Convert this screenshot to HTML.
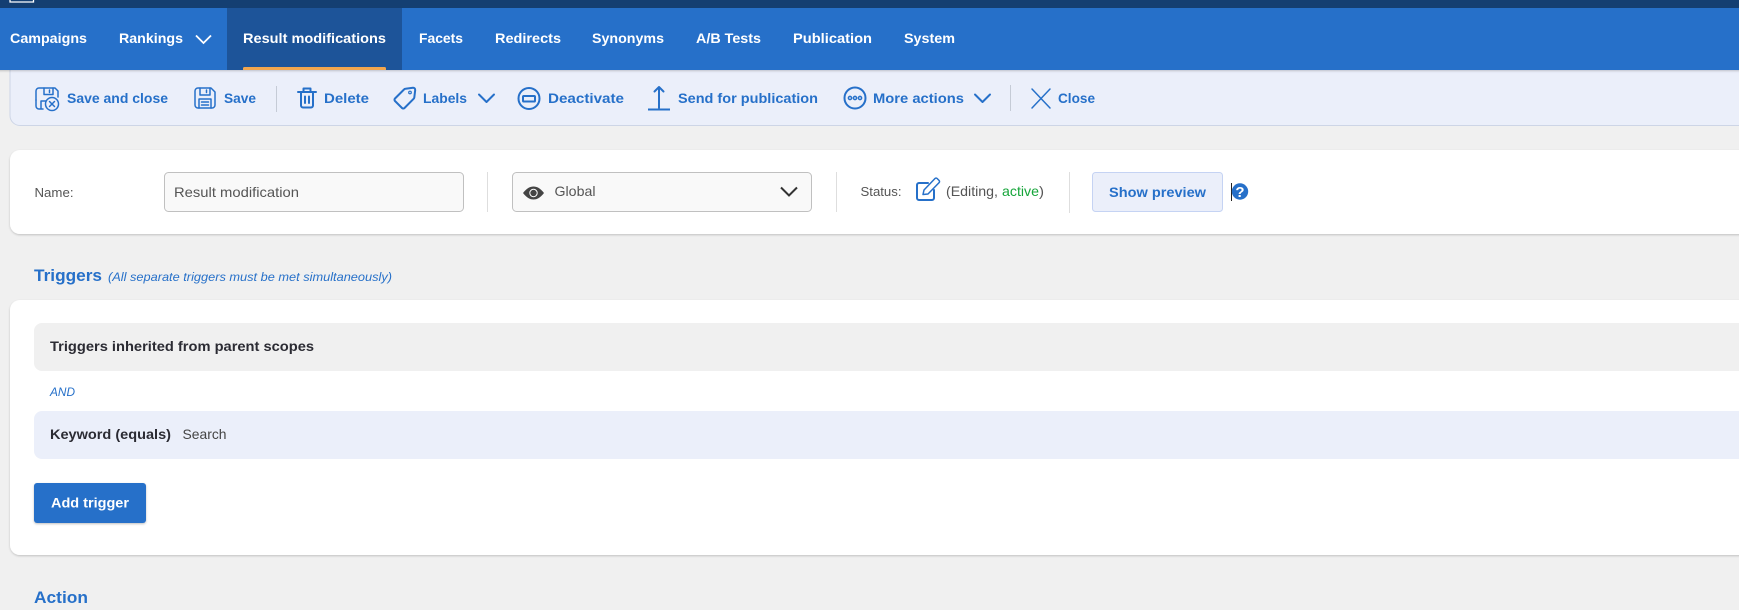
<!DOCTYPE html>
<html lang="en">
<head>
<meta charset="utf-8">
<title>Result modification</title>
<style>
html,body{margin:0;padding:0;background:#f0f0f0;width:1739px;height:610px;overflow:hidden}
svg{display:block}
text{font-family:"Liberation Sans",sans-serif}
.nav{font-size:14px;font-weight:700;fill:#fff}
.tb{font-size:14px;font-weight:700;fill:#2670c9}
.lb{font-size:13px;fill:#555}
.tx{font-size:14px;fill:#555}
.ic{fill:none;stroke:#2670c9;stroke-width:2;stroke-linejoin:round;stroke-linecap:round}
.ic1{fill:none;stroke:#2670c9;stroke-width:1.500;stroke-linejoin:round;stroke-linecap:round}
</style>
</head>
<body>
<svg width="1739" height="610" viewBox="0 0 1739 610" xmlns="http://www.w3.org/2000/svg">
<defs>
<filter id="s" x="-2%" y="-10%" width="104%" height="125%"><feDropShadow dx="0" dy="1" stdDeviation="1" flood-color="#000" flood-opacity=".2"/></filter>
<filter id="s2" x="-5%" y="-10%" width="110%" height="130%"><feDropShadow dx="0" dy="1" stdDeviation="1" flood-color="#000" flood-opacity=".25"/></filter>
</defs>
<rect width="1739" height="610" fill="#f0f0f0"/>

<!-- toolbar -->
<path d="M10 60H1760V125.500H20a10 10 0 0 1-10-10Z" fill="#ebeffa" stroke="#cdd5e6" stroke-width="1"/>

<!-- header -->
<rect x="-20" y="8" width="1780" height="62" fill="#2670c9" filter="url(#s)"/>
<rect width="1739" height="8" fill="#143f72"/>
<path d="M10 0V2H33.500V0" fill="none" stroke="#fff" stroke-width="1.300"/>
<rect x="227" y="8" width="175" height="62" fill="#1d5499"/>
<path d="M243 70v-1.500a1.500 1.500 0 0 1 1.500-1.500H384.500a1.500 1.500 0 0 1 1.500 1.500V70Z" fill="#f2a64e"/>

<text class="nav" x="10" y="43" textLength="77" lengthAdjust="spacingAndGlyphs">Campaigns</text>
<text class="nav" x="119" y="43" textLength="64" lengthAdjust="spacingAndGlyphs">Rankings</text>
<path d="M196 35.500l7.500 7.500 7.500-7.500" fill="none" stroke="#fff" stroke-width="1.800"/>
<text class="nav" x="243" y="43" textLength="143" lengthAdjust="spacingAndGlyphs">Result modifications</text>
<text class="nav" x="419" y="43" textLength="44" lengthAdjust="spacingAndGlyphs">Facets</text>
<text class="nav" x="495" y="43" textLength="66" lengthAdjust="spacingAndGlyphs">Redirects</text>
<text class="nav" x="592" y="43" textLength="72" lengthAdjust="spacingAndGlyphs">Synonyms</text>
<text class="nav" x="696" y="43" textLength="65" lengthAdjust="spacingAndGlyphs">A/B Tests</text>
<text class="nav" x="793" y="43" textLength="79" lengthAdjust="spacingAndGlyphs">Publication</text>
<text class="nav" x="904" y="43" textLength="51" lengthAdjust="spacingAndGlyphs">System</text>

<!-- toolbar items -->
<g class="ic1">
<path d="M36 100V91a3 3 0 0 1 3-3H55l3 3V97"/>
<path d="M44 88v6.500h9V88M49.500 90v2.500"/>
<path d="M36 100v6a3 3 0 0 0 3 3h4M41 109v-8h5"/>
<circle cx="52" cy="104" r="6.500"/>
<path d="M49.500 101.500l5 5M54.500 101.500l-5 5"/>
</g>
<text class="tb" x="67" y="103" textLength="101" lengthAdjust="spacingAndGlyphs">Save and close</text>

<g class="ic1">
<path d="M198 88H211l4 4V105a3 3 0 0 1-3 3H198a3 3 0 0 1-3-3V91a3 3 0 0 1 3-3Z"/>
<path d="M200 88v7h10V88M206.500 90v2.500"/>
<path d="M199 108v-9h12v9M201.500 102h7M201.500 105h7"/>
</g>
<text class="tb" x="224" y="103" textLength="32" lengthAdjust="spacingAndGlyphs">Save</text>
<rect x="276" y="86" width="1" height="26" fill="#c5cbd6"/>

<g class="ic">
<path d="M298 92H316M301 92V105.500a2 2 0 0 0 2 2h8a2 2 0 0 0 2-2V92M303.500 92V88.500H310.500V92"/>
<path d="M305 96.500V103M309 96.500V103"/>
</g>
<text class="tb" x="324" y="103" textLength="45" lengthAdjust="spacingAndGlyphs">Delete</text>

<g class="ic">
<path d="M404 89.500a2 2 0 0 1 1.500-.7L413 87.800a2 2 0 0 1 2.200 2.200l-.9 7.500a2 2 0 0 1-.7 1.300L404.500 108a1.800 1.800 0 0 1-2.500 0L395 101a1.800 1.800 0 0 1 0-2.500Z"/>
</g>
<circle cx="410" cy="92.500" r="1.300" fill="none" stroke="#2670c9" stroke-width="1.200"/>
<text class="tb" x="423" y="103" textLength="44" lengthAdjust="spacingAndGlyphs">Labels</text>
<path d="M479 94.500l7.500 7.500 7.500-7.500" class="ic" stroke-linecap="butt"/>

<circle cx="529" cy="98.500" r="10.500" class="ic"/>
<rect x="523" y="96" width="12" height="5.500" rx=".8" class="ic"/>
<text class="tb" x="548" y="103" textLength="76" lengthAdjust="spacingAndGlyphs">Deactivate</text>

<path d="M659 108V87M654.500 91.500L659 87l4.500 4.500" class="ic" stroke-linecap="butt"/>
<rect x="648" y="108.500" width="22" height="2" fill="#2670c9"/>
<text class="tb" x="678" y="103" textLength="140" lengthAdjust="spacingAndGlyphs">Send for publication</text>

<circle cx="855" cy="98" r="10.500" class="ic"/>
<circle cx="850" cy="98" r="1.600" class="ic1"/><circle cx="855" cy="98" r="1.600" class="ic1"/><circle cx="860" cy="98" r="1.600" class="ic1"/>
<text class="tb" x="873" y="103" textLength="91" lengthAdjust="spacingAndGlyphs">More actions</text>
<path d="M975 94.500l7.500 7.500 7.500-7.500" class="ic" stroke-linecap="butt"/>
<rect x="1010" y="85" width="1" height="26" fill="#c5cbd6"/>
<path d="M1032 89l18 19M1050 89l-18 19" class="ic1"/>
<text class="tb" x="1058" y="103" textLength="37" lengthAdjust="spacingAndGlyphs">Close</text>

<!-- card 1 -->
<path d="M1760 150H20a10 10 0 0 0-10 10V224a10 10 0 0 0 10 10H1760Z" fill="#fff" filter="url(#s)"/>
<text class="lb" x="34.500" y="197" textLength="39" lengthAdjust="spacingAndGlyphs">Name:</text>
<rect x="164.500" y="172.500" width="299" height="39" rx="4" fill="#f9f9f9" stroke="#c0c0c0"/>
<text class="tx" x="174" y="197" textLength="125" lengthAdjust="spacingAndGlyphs">Result modification</text>
<rect x="487" y="172" width="1" height="40" fill="#dedede"/>
<rect x="512.500" y="172.500" width="299" height="39" rx="4" fill="#f9f9f9" stroke="#c0c0c0"/>
<path d="M523 193c4-5 7-6.500 10.500-6.500S540 188 544 193c-4 5-7 6.500-10.500 6.500S527 198 523 193Z" fill="#444"/>
<circle cx="533.500" cy="193" r="3.700" fill="none" stroke="#fff" stroke-width="1"/>
<text class="tx" x="554.500" y="196" textLength="41" lengthAdjust="spacingAndGlyphs">Global</text>
<path d="M781 187.500l8 8 8-8" fill="none" stroke="#333" stroke-width="2"/>
<rect x="836" y="172" width="1" height="40" fill="#dedede"/>
<text class="lb" x="860.500" y="196" textLength="41" lengthAdjust="spacingAndGlyphs">Status:</text>
<path d="M928 183H919a2 2 0 0 0-2 2V198a2 2 0 0 0 2 2H932a2 2 0 0 0 2-2V190" class="ic"/>
<path d="M923 194.500l1-4.500L935 178.500a1.500 1.500 0 0 1 2.100 0l2 2a1.500 1.500 0 0 1 0 2.100L928 194Z" class="ic1"/>
<text class="tx" x="946" y="196" textLength="52" lengthAdjust="spacingAndGlyphs">(Editing,</text>
<text class="tx" x="1002" y="196" textLength="37" lengthAdjust="spacingAndGlyphs" style="fill:#16a53a">active</text>
<text class="tx" x="1039" y="196" textLength="5" lengthAdjust="spacingAndGlyphs">)</text>
<rect x="1069" y="172" width="1" height="41" fill="#dedede"/>
<rect x="1092.500" y="172.500" width="130" height="39" rx="3" fill="#ebeffa" stroke="#c5d3f3"/>
<text class="tb" x="1109" y="197" textLength="97" lengthAdjust="spacingAndGlyphs">Show preview</text>
<rect x="1231" y="183" width="1" height="18" fill="#222"/>
<circle cx="1240" cy="191.500" r="8.200" fill="#2670c9"/>
<text x="1240" y="197" text-anchor="middle" font-size="15" font-weight="700" fill="#fff">?</text>

<!-- Triggers -->
<text x="34" y="281" font-size="17" font-weight="700" fill="#2670c9" textLength="68" lengthAdjust="spacingAndGlyphs">Triggers</text>
<text x="108" y="281" font-size="12" font-style="italic" fill="#2670c9" textLength="284" lengthAdjust="spacingAndGlyphs">(All separate triggers must be met simultaneously)</text>

<path d="M1760 300H20a10 10 0 0 0-10 10V545a10 10 0 0 0 10 10H1760Z" fill="#fff" filter="url(#s)"/>
<path d="M1739 323H42a8 8 0 0 0-8 8V363a8 8 0 0 0 8 8H1739Z" fill="#f0f0f0"/>
<text x="50" y="351" font-size="14" font-weight="700" fill="#2b2b33" textLength="264" lengthAdjust="spacingAndGlyphs">Triggers inherited from parent scopes</text>
<text x="50" y="396" font-size="12" font-style="italic" fill="#2670c9" textLength="25" lengthAdjust="spacingAndGlyphs">AND</text>
<path d="M1739 411H42a8 8 0 0 0-8 8V451a8 8 0 0 0 8 8H1739Z" fill="#ebeffa"/>
<text x="50" y="439" font-size="14" font-weight="700" fill="#2b2b33" textLength="121" lengthAdjust="spacingAndGlyphs">Keyword (equals)</text>
<text x="182.500" y="439" font-size="14" fill="#444" textLength="44" lengthAdjust="spacingAndGlyphs">Search</text>
<rect x="34" y="483" width="112" height="40" rx="3" fill="#2670c9" filter="url(#s2)"/>
<text x="51" y="507.500" font-size="14" font-weight="700" fill="#fff" textLength="78" lengthAdjust="spacingAndGlyphs">Add trigger</text>

<text x="34" y="603" font-size="17" font-weight="700" fill="#2670c9" textLength="54" lengthAdjust="spacingAndGlyphs">Action</text>
</svg>
</body>
</html>
